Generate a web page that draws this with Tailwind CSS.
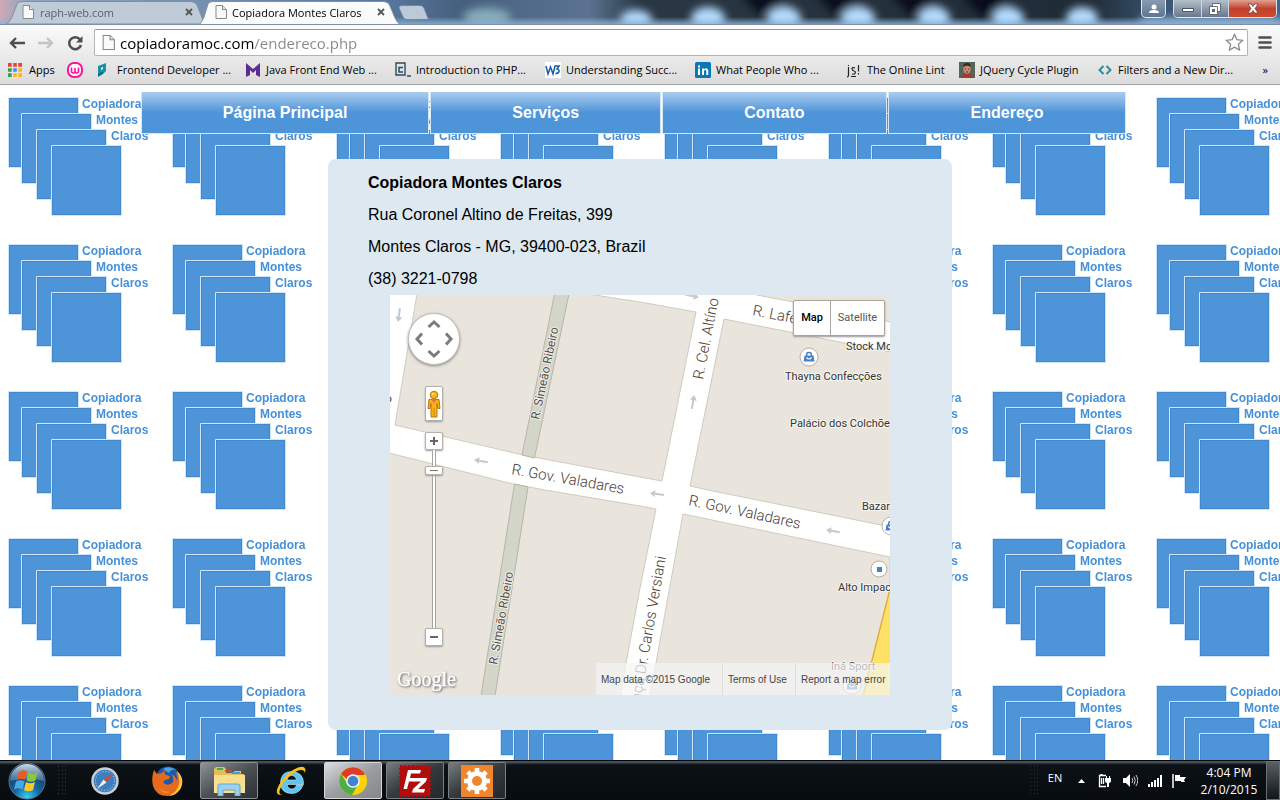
<!DOCTYPE html>
<html lang="pt-BR">
<head>
<meta charset="utf-8">
<title>Copiadora Montes Claros</title>
<script src="https://cdn.jsdelivr.net/npm/@tailwindcss/browser@4"></script>
</head>
<body class="h-screen flex flex-col overflow-hidden bg-white text-black font-['Open_Sans','Noto_Sans',sans-serif]">

<!-- Shared symbols -->
<svg class="hidden" aria-hidden="true">
  <symbol id="page" viewBox="0 0 12 14"><path d="M1 .5h6.500L11.500 4.500v9H1z" fill="#fafafa" stroke="#888"/><path d="M7.500.5v4h4" fill="#e4e4e4" stroke="#888"/></symbol>
  <symbol id="cross" viewBox="0 0 8 8"><path d="M1 1l6 6M7 1L1 7" stroke="#555" stroke-width="1.800"/></symbol>
  <symbol id="arrow" viewBox="0 0 14 8"><path d="M0 4l5-3.500v2.500h9v2H5v2.500z" fill="#c6c9ca"/></symbol>
  <symbol id="bag" viewBox="0 0 20 20"><circle cx="10" cy="10" r="9" fill="#fff" stroke="#b3afa8"/><path d="M5.500 8.500h9l1 6h-11z" fill="#4a7fcb"/><path d="M7.700 9V7q0-1.500 2.300-1.500T12.300 7v2" fill="none" stroke="#4a7fcb" stroke-width="1.500"/><path d="M7.500 10.500q2.500 3 5 0" fill="none" stroke="#fff" stroke-width="1.200"/></symbol>
</svg>

<header class="shrink-0">
  <!-- Window frame with tabs -->
  <div class="relative flex h-6 items-start overflow-hidden bg-[#3d4b5a]">
    <svg class="absolute inset-0 size-full" viewBox="0 0 1280 24" preserveAspectRatio="none" aria-hidden="true">
      <defs>
        <linearGradient id="aero"><stop offset="0" stop-color="#cfa9b4"/><stop offset=".02" stop-color="#8fa5bf"/><stop offset=".3" stop-color="#5878a0"/><stop offset=".36" stop-color="#46607e"/><stop offset=".46" stop-color="#5b7391"/><stop offset=".5" stop-color="#2a3744"/><stop offset=".85" stop-color="#1f2b36"/><stop offset=".91" stop-color="#3c5674"/><stop offset="1" stop-color="#44658a"/></linearGradient>
        <linearGradient id="sheen" x2="0" y2="1"><stop offset=".7" stop-color="#8fb4d8" stop-opacity="0"/><stop offset="1" stop-color="#8fb4d8" stop-opacity=".8"/></linearGradient>
        <filter id="soft" x="-10%" y="-60%" width="120%" height="220%"><feGaussianBlur stdDeviation="4"/></filter>
      </defs>
      <rect width="1280" height="24" fill="url(#aero)"/>
      <g filter="url(#soft)">
        <ellipse cx="487" cy="17" rx="24" ry="9" fill="#87aebb"/>
        <path d="M740-6h40l22 22h-40zM815-6h40l22 22h-40zM890-6h40l22 22h-40zM960-6h40l22 22h-40z" fill="#04080c" opacity=".75"/>
        <g fill="#b4dcff"><ellipse cx="636" cy="20" rx="16" ry="10"/><ellipse cx="708" cy="19" rx="17" ry="12"/><ellipse cx="784" cy="19" rx="17" ry="12"/><ellipse cx="858" cy="19" rx="17" ry="12"/><ellipse cx="934" cy="19" rx="16" ry="12"/><ellipse cx="1008" cy="19" rx="16" ry="12"/><ellipse cx="1082" cy="19" rx="16" ry="12"/></g>
        <path d="M1140 18h140v8h-140z" fill="#8fb8de"/>
      </g>
      <rect width="1280" height="24" fill="url(#sheen)"/>
    </svg>
    <div role="tablist" class="relative flex h-6 items-start">
      <div class="relative ml-[6px] flex h-6 w-[197px] items-center pl-4 pr-[10px]">
        <svg class="absolute inset-0 size-full" viewBox="0 0 197 24" preserveAspectRatio="none" aria-hidden="true"><path d="M0 24Q4 22 6 17L11 4Q12 1.500 16 1.500H184Q189 1.500 191 5L197 20V24z" fill="#c0cbd8" stroke="#7e8fa3"/></svg>
        <svg class="relative h-[14px] w-3 shrink-0"><use href="#page"/></svg>
        <button role="tab" aria-selected="false" class="relative ml-[6px] flex-1 pt-px text-left text-[11px] leading-6 text-[#5a5f66]">raph-web.com</button>
        <button aria-label="Close tab" class="relative"><svg class="size-2"><use href="#cross"/></svg></button>
      </div>
      <div class="relative -ml-1 flex h-6 w-[202px] items-center pl-4 pr-[16px]">
        <svg class="absolute inset-0 size-full" viewBox="0 0 202 24" preserveAspectRatio="none" aria-hidden="true"><path d="M0 25Q3 22 5 17L9 4Q10 1.500 14 1.500H184Q189 1.500 190.500 5L196 18Q198 23 202 25z" fill="#fbfbfb" stroke="#7e8fa3"/></svg>
        <svg class="relative h-[14px] w-3 shrink-0"><use href="#page"/></svg>
        <button role="tab" aria-selected="true" class="relative ml-[5px] flex-1 pt-px whitespace-nowrap text-left text-[11px] leading-6">Copiadora Montes Claros</button>
        <button aria-label="Close tab" class="relative"><svg class="size-2"><use href="#cross"/></svg></button>
      </div>
      <button aria-label="New tab" class="relative -ml-[3px] mt-[5px]"><svg class="h-[15px] w-[32px]" viewBox="0 0 32 15"><path d="M4 .5H22Q25 .5 26 3L30.500 14.500H9Q6 14.500 5 12L1 3Q.5 .5 4 .5z" fill="#bcc9d9" stroke="#6f86a0"/></svg></button>
    </div>
    <div class="relative ml-auto mr-[3px] flex gap-[7px]">
      <button aria-label="User" class="grid h-[18px] w-[25px] place-items-center rounded-b-[5px] border border-t-0 border-white/80 bg-linear-to-b from-[#8a9bb0] to-[#5d7591]"><svg class="size-[10px]" viewBox="0 0 10 10"><circle cx="5" cy="3" r="2.500" fill="#fff"/><path d="M0 9q0-3 5-3t5 3z" fill="#fff"/></svg></button>
      <div class="flex h-[18px] overflow-hidden rounded-b-[5px] border border-t-0 border-white/80">
        <button aria-label="Minimize" class="grid w-[28px] place-items-center border-r border-[#cfd8e2] bg-linear-to-b from-[#b5bfcb] via-[#8d9bac] to-[#68788d]"><svg class="h-2 w-3" viewBox="0 0 12 8"><path d="M.5 3.500h11v3H.5z" fill="#fff" stroke="#4b5563"/></svg></button>
        <button aria-label="Restore" class="grid w-[27px] place-items-center border-r border-[#cfd8e2] bg-linear-to-b from-[#b5bfcb] via-[#8d9bac] to-[#68788d]"><svg class="size-3" viewBox="0 0 12 12"><path d="M3.500 .5h8v8h-8z" fill="#fff" stroke="#4b5563" stroke-width=".8"/><path d="M.5 3.500h8v8h-8z" fill="#fff" stroke="#4b5563" stroke-width=".8"/><path d="M3 6h3v3H3z" fill="#5b6878"/></svg></button>
        <button aria-label="Close" class="grid w-[47px] place-items-center bg-linear-to-b from-[#e0a090] via-[#c0422c] to-[#d04a2c]"><svg class="h-[11px] w-3" viewBox="0 0 12 11"><path d="M1 1h3.200L6 3.500 7.800 1H11L8 5.500 11 10H7.800L6 7.500 4.200 10H1l3-4.500z" fill="#fff" stroke="#5b3a3a" stroke-width=".7"/></svg></button>
      </div>
    </div>
  </div>

  <!-- Toolbar -->
  <div class="border-b border-[#a3a3a3] bg-linear-to-b from-[#fbfbfb] via-[#ebebeb] to-[#dcdcdc] border-t border-t-[#7e8fa3]">
    <div class="flex h-[31px] items-end pr-2 pl-[9px]">
      <button aria-label="Back" class="mb-[7px]"><svg class="h-3 w-4" viewBox="0 0 16 12"><path d="M7 1L2 6l5 5M2 6h14" fill="none" stroke="#4f4f4f" stroke-width="2.400"/></svg></button>
      <button aria-label="Forward" class="mb-[7px] ml-[13px]"><svg class="h-3 w-4" viewBox="0 0 16 12"><path d="M9 1l5 5-5 5M14 6H0" fill="none" stroke="#c3c3c3" stroke-width="2.400"/></svg></button>
      <button aria-label="Reload" class="mb-[5px] ml-[13px]"><svg class="size-4" viewBox="0 0 16 16"><path d="M13 4.500A6 6 0 1 0 14 10" fill="none" stroke="#4f4f4f" stroke-width="2.500"/><path d="M9 7.500h6.500V1z" fill="#4f4f4f"/></svg></button>
      <form class="ml-[11px] flex h-[27px] flex-1 items-center rounded-xs border border-[#b4b4b4] border-t-[#999] bg-white pl-[7px] pr-[3px]">
        <label for="address" aria-label="Address"><svg class="h-[15px] w-[13px] shrink-0"><use href="#page"/></svg></label>
        <input id="address" type="text" value="copiadoramoc.com/endereco.php" class="ml-[5px] min-w-0 flex-1 bg-[linear-gradient(90deg,#000_134px,#888_134px)] bg-clip-text text-[15px] leading-6 text-transparent outline-none">
        <button type="button" aria-label="Bookmark this page"><svg class="size-[19px]" viewBox="0 0 19 19"><path d="M9.500 1.200l2.400 5.500 6 .6-4.500 4 1.300 5.900-5.200-3.100-5.200 3.100 1.300-5.900-4.500-4 6-.6z" fill="#fff" stroke="#8a8a8a" stroke-width="1.300" stroke-linejoin="round"/></svg></button>
      </form>
      <button aria-label="Menu" class="mb-[7px] ml-[10px]"><svg class="h-[13px] w-[14px]" viewBox="0 0 14 13"><path d="M1.500 1.500h11M1.500 6.500h11M1.500 11.500h11" stroke="#4f4f4f" stroke-width="2.600" stroke-linecap="round"/></svg></button>
    </div>
    <nav aria-label="Bookmarks" class="flex h-7 items-center pl-2 pr-2 text-[11px] whitespace-nowrap [&>a]:flex [&>a]:items-center [&>a]:gap-[5px] [&>a]:h-full [&_svg]:size-4 [&_svg]:shrink-0">
      <a href="#" class="w-[59px]"><svg viewBox="0 0 16 16"><path d="M0 1h4v4H0zM5 1h4v4H5zM10 1h4v4h-4z" fill="#ea4335"/><path d="M0 6h4v4H0z" fill="#34a050"/><path d="M5 6h4v4H5z" fill="#4285f4"/><path d="M10 6h4v4h-4zM5 11h4v4H5zM10 11h4v4h-4z" fill="#fbb70f"/><path d="M0 11h4v4H0z" fill="#34a050"/><path d="M4.500 0v16M9.500 0v16M0 5.500h16M0 10.500h16" stroke="#e4e4e4" stroke-width="1.500"/></svg>Apps</a>
      <a href="#" aria-label="Wamp" class="w-[29px]"><svg viewBox="0 0 16 16"><rect x="1" y="1" width="14" height="14" rx="6" fill="#fff" stroke="#ff0f9c" stroke-width="2"/><path d="M4.500 5.500v3.500q0 2 1.800 2T8 9V6v3q0 2 1.700 2t1.800-2V5.500" fill="none" stroke="#ff0f9c" stroke-width="1.600"/></svg></a>
      <a href="#" class="w-[149px]"><svg viewBox="0 0 16 16"><path d="M2 4l8-3v8l-3 3v-3L2 11z" fill="#1495a5"/><path d="M2 11v4l5-3V9z" fill="#0d7280"/><path d="M5 6l2-1v2L5 8z" fill="#fff"/></svg>Frontend Developer ...</a>
      <a href="#" class="w-[150px]"><svg viewBox="0 0 16 16"><path d="M1 1l7 6 7-6v14l-4-2V8l-3 3-3-3v5l-4 2z" fill="#5b2d90"/></svg>Java Front End Web ...</a>
      <a href="#" class="w-[150px]"><svg viewBox="0 0 16 16"><path d="M1 1h9v12H1z" fill="#dbe6ea" stroke="#2f4a5c" stroke-width="1.400"/><path d="M8 5.500H4v4.500h4M12 14h4" fill="none" stroke="#2f4a5c" stroke-width="1.500"/></svg>Introduction to PHP...</a>
      <a href="#" class="w-[150px]"><svg viewBox="0 0 16 16"><path d="M0 0h16v16H0z" fill="#fff"/><path d="M1 4l2 8 2.500-7L8 12l2-8M9.500 4H14l-2 3q2.500.5 2 2.500t-3.500 2" fill="none" stroke="#1c5aa6" stroke-width="1.500"/></svg>Understanding Succ...</a>
      <a href="#" class="w-[151px]"><svg viewBox="0 0 16 16"><rect width="16" height="16" rx="1.500" fill="#0a78b5"/><path d="M3 6.500h2V13H3zM3 3.500h2v2H3zM7 6.500h2v1q1-1.200 2.300-1.200 2 0 2 2.600V13h-2V9.500q0-1.400-1.100-1.400T9 9.500V13H7z" fill="#fff"/></svg>What People Who ...</a>
      <a href="#" class="w-[113px]"><svg viewBox="0 0 16 16"><path d="M2.500 5v8q0 2-1.500 2M9 6q-3-1-3 .8T8 9t1 2.500q-.5 1.200-3 .5M12.500 3v6.500M12.500 11v1.500M2 3.500h1M5 14.500h5" fill="none" stroke="#222" stroke-width="1.200"/></svg>The Online Lint</a>
      <a href="#" class="w-[138px]"><svg viewBox="0 0 16 16"><path d="M0 0h16v16H0z" fill="#52665a"/><path d="M2 16q1-5 6-5t6 5z" fill="#a03a34"/><ellipse cx="8" cy="7" rx="3.700" ry="5" fill="#c98a72"/><path d="M4.300 5Q4 1 8 1t3.700 4Q8 2.500 4.300 5z" fill="#3b2a22"/><path d="M6 7h1M9 7h1M7 10h2" stroke="#5a2e25"/></svg>JQuery Cycle Plugin</a>
      <a href="#" class="w-[150px]"><svg viewBox="0 0 16 16"><path d="M6.500 4L2.500 8l4 4M9.500 4l4 4-4 4" fill="none" stroke="#2d8e9c" stroke-width="2"/></svg>Filters and a New Dir...</a>
      <button aria-label="More bookmarks" class="ml-auto mr-1">»</button>
    </nav>
  </div>
</header>

<main class="relative min-h-0 flex-1 overflow-hidden pt-[7px] font-['Liberation_Sans',Arial,sans-serif] text-base">
  <!-- Repeating logo wallpaper -->
  <svg class="absolute inset-0 size-full" aria-hidden="true">
    <defs>
      <symbol id="sheet" viewBox="0 0 71 71"><path d="M.5 .5h70v70H.5z" fill="#4d94d8" stroke="#cfe6fa"/><path d="M1.500 1.500h68v68h-68z" fill="none" stroke="#4189cf"/></symbol>
      <pattern id="logo" width="164" height="147" patternUnits="userSpaceOnUse">
        <use href="#sheet" x="8" y="12" width="71" height="71"/>
        <use href="#sheet" x="21" y="28" width="71" height="71"/>
        <use href="#sheet" x="36" y="44" width="71" height="71"/>
        <use href="#sheet" x="51" y="60" width="71" height="71"/>
        <g fill="#4590d6" font-family="Liberation Sans, Arial, sans-serif" font-weight="bold" font-size="12"><text x="82" y="23">Copiadora</text><text x="96" y="39">Montes</text><text x="111" y="55">Claros</text></g>
      </pattern>
    </defs>
    <rect width="100%" height="100%" fill="url(#logo)"/>
  </svg>

  <nav aria-label="Principal" class="relative mx-auto w-full pl-[11%] pr-[12%]">
    <ul class="grid grid-cols-[289fr_231fr_225fr_239fr] gap-x-px [&_a]:block [&_a]:h-[42px] [&_a]:border [&_a]:border-t-0 [&_a]:border-[#d6e8f8] [&_a]:bg-linear-to-b [&_a]:from-[#a9cdee] [&_a]:to-[#4d94d8] [&_a]:to-50% [&_a]:text-center [&_a]:leading-[42px] [&_a]:font-bold [&_a]:text-white">
      <li><a href="#">Página Principal</a></li>
      <li><a href="#">Serviços</a></li>
      <li><a href="#">Contato</a></li>
      <li><a href="#">Endereço</a></li>
    </ul>
  </nav>

  <article class="relative mx-auto mt-[25px] w-[624px] max-w-full rounded-lg bg-[#dde8f0] pt-2 pb-[35px]">
    <div class="pl-10 leading-8">
      <h1 class="font-bold">Copiadora Montes Claros</h1>
      <p>Rua Coronel Altino de Freitas, 399</p>
      <p>Montes Claros - MG, 39400-023, Brazil</p>
      <p>(38) 3221-0798</p>
    </div>
    <section aria-label="Map" class="relative mx-auto h-[400px] w-[500px] overflow-hidden font-[Roboto,sans-serif]">
      <svg class="absolute inset-0" width="500" height="400" viewBox="0 0 500 400">
        <rect width="500" height="400" fill="#fff"/>
        <g fill="#e9e5dd" stroke="#cfcbbf">
          <path d="M27-1L5 130l128 30 117 22 22 4L306 17 250 7 198-1z"/>
          <path d="M-1 158L123 189l32 6 95 16 16 3-16 79-20 108H-1z"/>
          <path d="M293 219L500 262v139H260z"/>
          <path d="M300 191L334 24l121 24 46 9v175L318 195z"/>
          <path d="M362-1l41 8 98 20V-1z"/>
        </g>
        <path d="M164.500-1L132 160l12.500 3L179-1zM124.500 189L91 401h14L138 192z" fill="#d3d5c8" stroke="#b9b5a9"/>
        <path d="M501 290L473 401h28z" fill="#ffe168" stroke="#dfae3c" stroke-width="1.500"/>
        <g>
          <use href="#arrow" x="-7" y="-4" width="14" height="8" transform="translate(91 166) rotate(10)"/>
          <use href="#arrow" x="-7" y="-4" width="14" height="8" transform="translate(9 20) rotate(-82)"/>
          <use href="#arrow" x="-7" y="-4" width="14" height="8" transform="translate(303 107) rotate(100)"/>
          <use href="#arrow" x="-7" y="-4" width="14" height="8" transform="translate(302 1) rotate(193)"/>
          <use href="#arrow" x="-7" y="-4" width="14" height="8" transform="translate(267 199) rotate(8)"/>
          <use href="#arrow" x="-7" y="-4" width="14" height="8" transform="translate(443 236) rotate(10)"/>
        </g>
        <g font-family="Roboto, sans-serif" fill="#4a4038" stroke="#fff" stroke-width="3" stroke-linejoin="round" paint-order="stroke" font-size="15" font-weight="300">
          <text transform="translate(121 179) rotate(10)">R. Gov. Valadares</text>
          <text transform="translate(298 210) rotate(12)">R. Gov. Valadares</text>
          <text transform="translate(313 85) rotate(-79)">R. Cel. Altíno de Freitas</text>
          <text transform="translate(362 20) rotate(11)">R. Lafetá</text>
          <text transform="translate(276 262) rotate(-80)" text-anchor="end">Praça Dr. Carlos Versiani</text>
          <text transform="translate(2 101) rotate(-80)" text-anchor="end" font-size="14" font-weight="400">ro</text>
          <g font-size="12" font-weight="400" fill="#574f48" stroke="#efeee8" stroke-width="2">
            <text transform="translate(149 125) rotate(-78)">R. Simeão Ribeiro</text>
            <text transform="translate(107 370) rotate(-80)">R. Simeão Ribeiro</text>
          </g>
        </g>
        <g font-family="Roboto, sans-serif" font-size="11" fill="#333" stroke="#f7f5f1" stroke-width="2" stroke-linejoin="round" paint-order="stroke">
          <text x="395" y="85">Thayna Confecções</text>
          <text x="400" y="132">Palácio dos Colchões</text>
          <text x="456" y="55">Stock Modas</text>
          <text x="472" y="215">Bazar</text>
          <text x="448" y="296">Alto Impacto</text>
          <text x="441" y="375">Iná Sport</text>
        </g>
        <use href="#bag" x="409" y="52" width="20" height="20"/>
        <use href="#bag" x="491" y="221" width="20" height="20"/>
        <use href="#bag" x="452" y="380" width="20" height="20"/>
        <circle cx="489" cy="274" r="8" fill="#fff" stroke="#b3afa8"/><path d="M487 272h5v5h-5z" fill="#4a7fcb"/>
        <text x="7" y="391" font-family="Liberation Serif, serif" font-size="20" fill="#fff" stroke="#fff" stroke-width=".4" class="drop-shadow-[1px_1px_1px_#666]">Google</text>
      </svg>

      <!-- Map controls float over the map -->
      <button aria-label="Pan" class="absolute top-[18px] left-[18px] grid size-[52px] place-items-center rounded-full border border-[#c4c0b8] bg-white shadow-[0_1px_3px_#888]">
        <svg class="size-10" viewBox="0 0 40 40"><path d="M14.500 8l5.500-5 5.500 5M14.500 32l5.500 5 5.500-5M8 14.500L3 20l5 5.500M32 14.500l5 5.500-5 5.500" fill="none" stroke="#7b7b7b" stroke-width="3"/></svg>
      </button>
      <div class="absolute top-[91px] left-[35px] flex w-[18px] flex-col items-center [&>button]:grid [&>button]:w-[18px] [&>button]:place-items-center [&>button]:rounded-xs [&>button]:border [&>button]:border-[#b5b1a9] [&>button]:bg-white [&>button]:shadow-[0_1px_2px_#999]">
        <button aria-label="Street View" class="mb-[11px] h-[35px]"><svg class="h-[28px] w-[14px]" viewBox="0 0 14 28"><g fill="#f9b214" stroke="#b87512"><path d="M2 9.500h10l1 9h-2l-1-5v13.500H4V13.500l-1 5H1z"/><circle cx="7" cy="5" r="3.800"/></g><path d="M4 9h6l-3 4z" fill="#ee6a55"/><path d="M7 18v9" stroke="#d08a10"/><circle cx="6" cy="4" r="1.300" fill="#ffe08a"/></svg></button>
        <button aria-label="Zoom in" class="h-[18px]"><svg class="size-2" viewBox="0 0 8 8"><path d="M0 4h8M4 0v8" stroke="#666" stroke-width="2"/></svg></button>
        <input type="range" aria-label="Zoom" min="0" max="21" value="19" class="h-[178px] w-[18px] appearance-none [direction:rtl] [writing-mode:vertical-lr] bg-[linear-gradient(90deg,transparent_7px,#aaa59c_7px,#aaa59c_8px,#fff_8px,#fff_10px,#aaa59c_10px,#aaa59c_11px,transparent_11px)] [&::-webkit-slider-thumb]:h-[9px] [&::-webkit-slider-thumb]:w-[18px] [&::-webkit-slider-thumb]:appearance-none [&::-webkit-slider-thumb]:rounded-xs [&::-webkit-slider-thumb]:border [&::-webkit-slider-thumb]:border-[#b5b1a9] [&::-webkit-slider-thumb]:bg-[linear-gradient(#777,#777)] [&::-webkit-slider-thumb]:bg-white [&::-webkit-slider-thumb]:bg-[length:8px_1px] [&::-webkit-slider-thumb]:bg-center [&::-webkit-slider-thumb]:bg-no-repeat [&::-webkit-slider-thumb]:shadow-[0_1px_2px_#999]">
        <button aria-label="Zoom out" class="h-[18px]"><svg class="size-2" viewBox="0 0 8 8"><path d="M0 4h8" stroke="#666" stroke-width="2"/></svg></button>
      </div>
      <div class="absolute top-[5px] right-[5px] flex h-9 w-[92px] rounded-xs border border-[#aaa59c] bg-white text-[11px] shadow-[0_1px_2px_#999]">
        <button class="w-[37px] border-r border-[#aaa59c] font-medium text-black">Map</button>
        <button class="flex-1 text-[#565656]">Satellite</button>
      </div>
      <div class="absolute right-0 bottom-0 flex h-8 w-[294px] items-center bg-[#f5f5f5]/70 font-['Liberation_Sans',Arial,sans-serif] text-[10px] whitespace-nowrap text-[#444] [&>*]:flex [&>*]:h-full [&>*]:items-center [&>*]:pl-[5px]">
        <span class="w-[126px]">Map data ©2015 Google</span>
        <a href="#" class="w-[73px] border-l border-[#e0ddd7]">Terms of Use</a>
        <a href="#" class="flex-1 border-l border-[#e0ddd7]">Report a map error</a>
      </div>
    </section>
  </article>
</main>

<!-- Taskbar -->
<footer class="flex h-10 shrink-0 items-stretch border-t border-[#05080b] bg-linear-to-b from-[#4a525b] from-3% via-[#0c1116] via-10% to-[#080c11] text-white">
  <button aria-label="Start" class="grid w-[54px] place-items-center">
    <svg class="size-[38px]" viewBox="0 0 38 38"><defs><radialGradient id="orb" cy=".95" r=".9"><stop offset="0" stop-color="#35d0f5"/><stop offset=".4" stop-color="#1567a0"/><stop offset="1" stop-color="#0f2f55"/></radialGradient><linearGradient id="gloss" x2="0" y2="1"><stop stop-color="#e2edf5" stop-opacity=".9"/><stop offset="1" stop-color="#9ab8cf" stop-opacity=".35"/></linearGradient></defs><circle cx="19" cy="19" r="18" fill="url(#orb)" stroke="#54788e"/><path d="M2 19a17 17 0 0 1 34 0q-17-5-34 0z" fill="url(#gloss)"/><path d="M11 10q4-3 8-.5l-2 8.500q-4-2.500-8.500 0z" fill="#ee5a24"/><path d="M20.500 10.500q4.500 2.500 9 0l-2 8q-4.500 2.500-9 0z" fill="#8cc63f"/><path d="M8 19.500q4.500-2.500 8.500 0l-2 8q-4-2.500-8.500 0z" fill="#4aa8e8"/><path d="M18 20q4.500 2.500 9 0l-2 8q-4.500 2.500-9 0z" fill="#fdc926"/></svg>
  </button>
  <svg class="h-full w-[22px] text-[#454b51]" viewBox="0 0 22 40"><path d="M4.500 5v30M8.500 5v30M11.500 5v30" stroke="currentColor" stroke-dasharray="1 3"/></svg>
  <div class="flex gap-1 py-px [&>button]:grid [&>button]:w-[58px] [&>button]:place-items-center [&>button]:rounded-xs">
    <button aria-label="Safari"><svg class="size-7" viewBox="0 0 28 28"><circle cx="14" cy="14" r="12.500" fill="#3c7fc0" stroke="#c9cfd4" stroke-width="2.500"/><circle cx="14" cy="14" r="9.500" fill="none" stroke="#cfe3f5" stroke-dasharray="1 2"/><path d="M22 6l-6.500 9.500-3-3z" fill="#e2432c"/><path d="M6 22l6.500-9.500 3 3z" fill="#f2f5f7"/></svg></button>
    <button aria-label="Firefox"><svg class="size-8" viewBox="0 0 32 32"><circle cx="17" cy="14" r="12.500" fill="#1d57a5"/><path d="M12 4q6-4 13 1-5-1-7 3z" fill="#4ba3df"/><path d="M3 5l3 4 5-1 3-3q-1 4 1 5l4 1-1 3-4 1q-3 2 0 4 4 2 8-2 1-5-2-8 5 2 6 7 1-5-2-10 8 6 6 15-2 9-13 10-12 0-15-10Q0 13 3 5z" fill="#e66a1e"/><path d="M26 6q8 7 4 17-4 7-12 8 9-5 10-12 1-6-2-13z" fill="#fdc339"/><path d="M5 18q3 9 14 9-8 4-14-9z" fill="#f79b2b"/></svg></button>
    <button aria-label="Explorer" class="border border-[#8a8f93] bg-linear-to-br from-[#8f9498] via-[#4c5155] to-[#2b3034]"><svg class="h-[30px] w-[34px]" viewBox="0 0 34 30"><path d="M2 3l2-2h8l2 2v4h8V5h7v3h3v19H2z" fill="#e4bd57"/><path d="M5 2h6v2H5z" fill="#36b04a"/><path d="M13 4h7v2h-7z" fill="#d8442e"/><path d="M20 6h8v2h-8z" fill="#3a9ee0"/><path d="M2 9h31v18H2z" fill="#f9e6a0"/><path d="M2 9h31l-2 18H4z" fill="#f4d884" opacity=".6"/><path d="M6 30V20q0-2 2-2h18q2 0 2 2v10h-5v-6H11v6z" fill="#9bd0ee" stroke="#5ea9d4"/></svg></button>
    <button aria-label="Internet Explorer"><svg class="size-8" viewBox="0 0 32 32"><path d="M28 20q-3 8.500-11.500 8.500Q5.500 28 5.500 17.500 6 6.500 17 6.500q12 1 11.500 13H12q1 4.500 5 4.500 3.500 0 4.500-4zM12 15h9.500q-1-4.500-4.800-4.500T12 15z" fill="#5fc4f2" stroke="#c9efff" stroke-width=".6" fill-rule="evenodd"/><path d="M8 30Q-2 31 4 20 11 7 23 2.500q9-3 7 5.500-1-5-8-2Q12 11 6 22q-4 8 2 8z" fill="#f5c11f"/></svg></button>
    <button aria-label="Chrome" class="border border-[#d5d8da] bg-linear-to-br from-[#dadcde] via-[#9b9ea1] to-[#85888b]"><svg class="size-7" viewBox="0 0 28 28"><circle cx="14" cy="14" r="14" fill="#fcd20b"/><path d="M2 7a14 14 0 0 1 24 0l-1 1H14a6.500 6.500 0 0 0-6 4z" fill="#dd3b2c"/><path d="M2 7a14 14 0 0 0 11 21l5.500-9.500A6.500 6.500 0 0 1 8 16.500z" fill="#4caf4a"/><circle cx="14" cy="14" r="6.800" fill="#f4f4f4"/><circle cx="14" cy="14" r="5.300" fill="#3f83d0"/></svg></button>
    <button aria-label="FileZilla" class="border border-[#7c8084] bg-linear-to-br from-[#777c80] via-[#34393d] to-[#23282c]"><svg class="size-8" viewBox="0 0 32 32"><path d="M1 1h30v30H1z" fill="#b30c0c" stroke="#b30c0c" stroke-width="2" stroke-dasharray="2 2"/><path d="M9 5h13l-1 3.500h-9L11 13h6l-1 3.500h-6L8 24H4.500z" fill="#fff"/><path d="M16 13h12l-1 3.500-8 7.500h7l-1 3.500H13l1-3.500 8-7.500h-7z" fill="#fff"/></svg></button>
    <button aria-label="Settings" class="border border-[#7c8084] bg-linear-to-br from-[#777c80] via-[#34393d] to-[#23282c]"><svg class="size-8" viewBox="0 0 32 32"><path d="M0 0h32v32H0z" fill="#f0862b"/><circle cx="16" cy="16" r="7.500" fill="none" stroke="#fff" stroke-width="5"/><path d="M16 3v4M16 25v4M3 16h4M25 16h4M6.800 6.800l3 3M22.200 22.200l3 3M6.800 25.200l3-3M22.200 9.800l3-3" stroke="#fff" stroke-width="4.500"/></svg></button>
  </div>
  <svg class="ml-auto h-full w-[17px] text-[#353b41]" viewBox="0 0 17 40"><path d="M1.500 5v30M5.500 5v30M8.500 5v30" stroke="currentColor" stroke-dasharray="1 3"/></svg>
  <div class="flex items-center text-xs [&_button]:grid [&_button]:place-items-center">
    <button class="mb-1 w-[18px] text-[11px]">EN</button>
    <button aria-label="Show hidden icons" class="ml-[14px]"><svg class="h-1 w-[7px]" viewBox="0 0 7 4"><path d="M0 4l3.500-4L7 4z" fill="#fff"/></svg></button>
    <button aria-label="Power" class="ml-[13px]"><svg class="size-[14px]" viewBox="0 0 14 14"><path d="M8 1.500H4V.5H3v1H1.500v11H8M3.500 4v6M5.500 4v6" fill="none" stroke="#fff" stroke-width="1.300"/><path d="M7 4h1V2h1v2h2V2h1v2h1v3q0 2-2 2v4H9V9Q7 9 7 7z" fill="#fff"/></svg></button>
    <button aria-label="Volume" class="ml-[11px]"><svg class="h-[13px] w-[15px]" viewBox="0 0 15 13"><path d="M0 4h3l4-4v13L3 9H0z" fill="#fff"/><path d="M9 4q1.500 2.500 0 5M11 2.500q2.500 4 0 8M13 1q3.500 5.500 0 11" fill="none" stroke="#ccc"/></svg></button>
    <button aria-label="Network" class="ml-[10px]"><svg class="h-3 w-[15px]" viewBox="0 0 15 12"><path d="M0 9h2v3H0zM3 7h2v5H3zM6 5h2v7H6zM9 3h2v9H9zM12 0h2v12h-2z" fill="#fff"/></svg></button>
    <button aria-label="Action center" class="ml-[9px]"><svg class="size-[14px]" viewBox="0 0 14 14"><path d="M1 0v14" stroke="#fff" stroke-width="1.500"/><path d="M3 1h5v2h6l-2 3 1 2H9V7H3z" fill="#fff"/></svg></button>
    <button aria-label="Date and time" class="ml-[10px] w-[66px] leading-[17px]"><span>4:04 PM</span><span>2/10/2015</span></button>
  </div>
  <button aria-label="Show desktop" class="ml-[4px] w-[14px] border border-[#6a7076] bg-linear-to-b from-[#5a6066] to-[#12161a]"></button>
</footer>
</body>
</html>
